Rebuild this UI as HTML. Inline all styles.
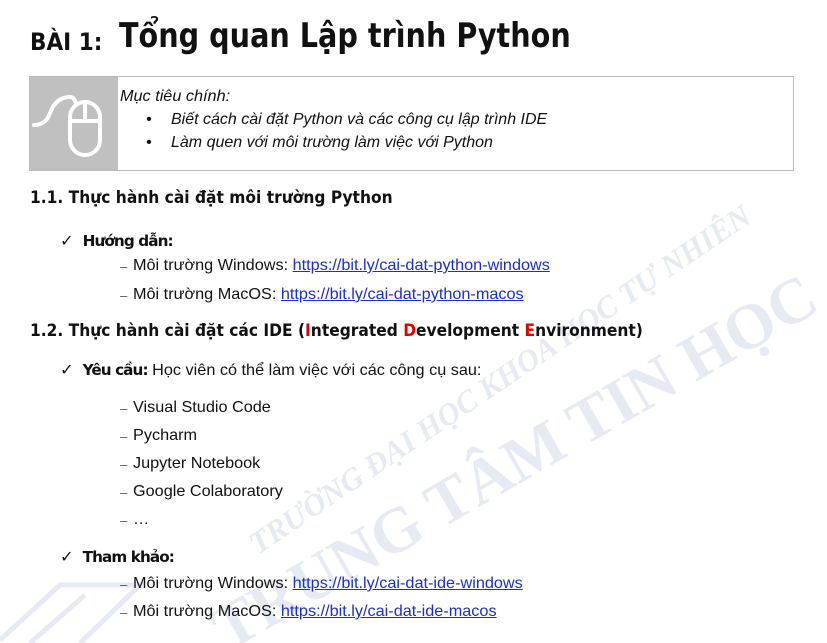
<!DOCTYPE html>
<html><head><meta charset="utf-8"><style>
body{margin:0;width:827px;height:643px;background:#fff;position:relative;overflow:hidden;font-family:"Liberation Sans",sans-serif;color:#111}
.a{position:absolute;white-space:nowrap;transform-origin:0 0}
.n{font-size:16px;transform:scaleX(1.015)}
.h{font-family:"DejaVu Sans",sans-serif;font-size:17px;font-weight:bold;transform:scaleX(0.91)}
b{font-family:"DejaVu Sans",sans-serif;font-size:15px;letter-spacing:-0.9px}
a{color:#1a2fd0;text-decoration:underline}
.r{color:#e00000}
.wm{position:absolute;left:0;top:0}
.d{font-size:13px;color:#555}
</style></head><body>
<svg class="wm" width="827" height="643">
<g fill="#e6ebf3" font-family="Liberation Serif,serif" font-weight="bold">
<text x="0" y="0" font-size="64" transform="translate(228,652) rotate(-30)">TRUNG TÂM TIN HỌC</text>
<text x="0" y="0" font-size="31" font-style="italic" transform="translate(258,555) rotate(-34)">TRƯỜNG ĐẠI HỌC KHOA HỌC TỰ NHIÊN</text>
</g>
<g fill="none" stroke="#e6ebf3" stroke-width="5"><path d="M0 640 L60 585 L140 585 L80 643"/><path d="M30 643 L85 595"/></g>
</svg>
<div class="a" style="left:30px;top:28px;font-family:'DejaVu Sans',sans-serif;font-size:24px;font-weight:bold;transform:scaleX(0.9)">BÀI 1:</div>
<div class="a" style="left:119px;top:16px;font-family:'DejaVu Sans',sans-serif;font-size:34px;font-weight:bold;transform:scaleX(0.843)">Tổng quan Lập trình Python</div>
<div style="position:absolute;left:29px;top:76px;width:763px;height:93px;border:1px solid #bbb;background:#fff"></div>
<div style="position:absolute;left:30px;top:77px;width:88px;height:93px;background:#c0c0c0"></div>
<svg style="position:absolute;left:30px;top:77px" width="88" height="93"><g fill="none" stroke="#fff" stroke-width="4" stroke-linecap="round"><path d="M4 48 Q16 48 20 36 Q26 20 40 20 Q44 20 46 26"/><rect x="40" y="25" width="30" height="53" rx="15"/><path d="M40 44 H70 M55 25 V44"/></g></svg>
<div class="a n" style="left:120px;top:88px;font-style:italic">Mục tiêu chính:</div>
<div class="a n" style="left:146px;top:111px;font-style:italic">•</div><div class="a n" style="left:171px;top:111px;font-style:italic;transform:none">Biết cách cài đặt Python và các công cụ lập trình IDE</div>
<div class="a n" style="left:146px;top:134px;font-style:italic">•</div><div class="a n" style="left:171px;top:134px;font-style:italic;transform:none">Làm quen với môi trường làm việc với Python</div>
<div class="a h" style="left:30px;top:188px">1.1. Thực hành cài đặt môi trường Python</div>
<div class="a n" style="left:60px;top:231px">✓&nbsp;&nbsp;<b>Hướng dẫn:</b></div>
<div class="a n d" style="left:120px;top:259px">–</div><div class="a n" style="left:133px;top:257px">Môi trường Windows: <a>https://bit.ly/cai-dat-python-windows</a></div>
<div class="a n d" style="left:120px;top:288px">–</div><div class="a n" style="left:133px;top:286px">Môi trường MacOS: <a>https://bit.ly/cai-dat-python-macos</a></div>
<div class="a h" style="left:30px;top:321px">1.2. Thực hành cài đặt các IDE (<span class="r">I</span>ntegrated <span class="r">D</span>evelopment <span class="r">E</span>nvironment)</div>
<div class="a n" style="left:60px;top:360px">✓&nbsp;&nbsp;<b>Yêu cầu:</b> Học viên có thể làm việc với các công cụ sau:</div>
<div class="a n d" style="left:120px;top:401px">–</div><div class="a n" style="left:133px;top:399px">Visual Studio Code</div>
<div class="a n d" style="left:120px;top:429px">–</div><div class="a n" style="left:133px;top:427px">Pycharm</div>
<div class="a n d" style="left:120px;top:457px">–</div><div class="a n" style="left:133px;top:455px">Jupyter Notebook</div>
<div class="a n d" style="left:120px;top:485px">–</div><div class="a n" style="left:133px;top:483px">Google Colaboratory</div>
<div class="a n d" style="left:120px;top:513px">–</div><div class="a n" style="left:133px;top:511px">…</div>
<div class="a n" style="left:60px;top:547px">✓&nbsp;&nbsp;<b>Tham khảo:</b></div>
<div class="a n d" style="left:120px;top:577px">–</div><div class="a n" style="left:133px;top:575px">Môi trường Windows: <a>https://bit.ly/cai-dat-ide-windows</a></div>
<div class="a n d" style="left:120px;top:605px">–</div><div class="a n" style="left:133px;top:603px">Môi trường MacOS: <a>https://bit.ly/cai-dat-ide-macos</a></div>
</body></html>
